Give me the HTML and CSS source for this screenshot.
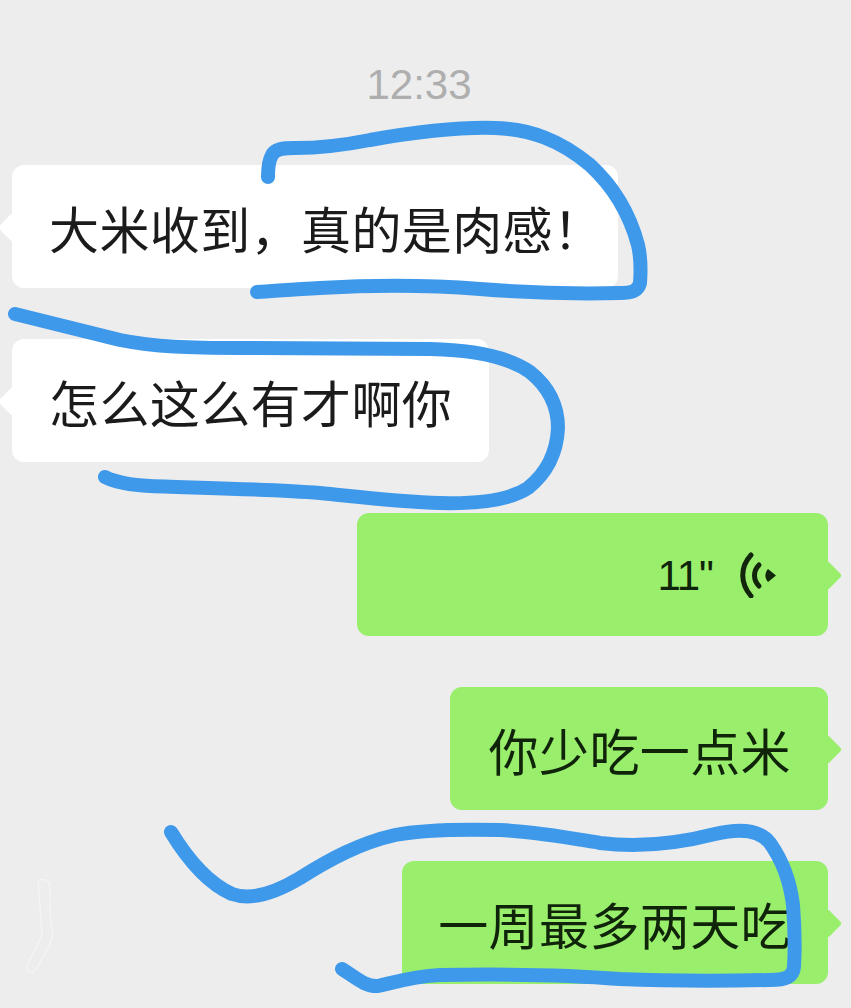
FILE: index.html
```html
<!DOCTYPE html>
<html lang="zh-CN">
<head>
<meta charset="utf-8">
<title>聊天记录</title>
<link rel="stylesheet" href="styles.css">
</head>
<body>
<main class="chat">
  <div class="time">12:33</div>
  <div class="bubble incoming"><span class="text trailing-punct">大米收到，真的是肉感！</span></div>
  <div class="bubble incoming"><span class="text">怎么这么有才啊你</span></div>
  <div class="bubble outgoing voice">
    <span class="duration">11"</span>
    <svg class="voice-icon" viewBox="0 0 36 46" aria-hidden="true">
      <path class="wave" d="M11 3 C0 15 0 31 11 44"/>
      <path class="wave" d="M19 13 C13 19 13 28 19 34"/>
      <path class="dot" d="M28 17 L36 23.5 L28 30 C24.5 26 24.5 21 28 17 Z"/>
    </svg>
  </div>
  <div class="bubble outgoing roomy"><span class="text">你少吃一点米</span></div>
  <div class="bubble outgoing snug"><span class="text">一周最多两天吃</span></div>
</main>
<svg class="scribbles" viewBox="0 0 851 1008" aria-hidden="true">
  <path class="doodle" d="M38 882 C39 879 46 878 49 883 C51 895 50 905 50 913 C51 922 52 930 53 936 C49 948 42 958 37 968 C34 974 28 973 26 968 C30 958 37 946 42 935 C41 920 40 905 38 882 Z"/>
  <path class="ink" d="M268 177 C268 170 269 160 272 155 C275 149 282 148 295 148 C320 148 340 146 370 140 C410 133 460 127 495 128 C530 129 560 140 590 165 C615 188 630 215 638 245 C641 258 641 270 640 283 C638 291 632 293 620 293 C580 294 530 293 480 289 C430 285 370 285 320 288 C295 289 275 291 257 292"/>
  <path class="ink" d="M15 314 C50 323 85 331 120 340 C155 347 190 348 240 348 L430 349 C480 350 510 358 530 372 C550 388 558 408 558 428 C557 450 548 472 528 488 C510 500 480 504 440 503 C400 502 360 497 320 493 C270 489 200 488 150 486 C130 485 115 482 105 477"/>
  <path class="ink" d="M171 832 C185 855 205 882 232 894 C252 901 275 893 300 878 C330 859 360 843 395 835 C420 830 460 829 500 830 C540 832 570 838 600 843 C640 848 680 843 715 834 C740 828 760 830 770 843 C782 860 790 880 793 905 C795 930 795 950 794 967 C793 977 786 980 770 980 C720 981 670 981 620 979 C570 975 500 974 440 975 C415 976 395 982 378 986 C365 987 355 977 342 969"/>
</svg>
</body>
</html>
```
FILE: styles.css
```css
html, body {
  margin: 0;
  padding: 0;
}

body {
  position: relative;
  width: 851px;
  height: 1008px;
  overflow: hidden;
  background: #ededed;
  font-family: "Noto Sans CJK SC", "Liberation Sans", sans-serif;
}

.chat {
  display: flex;
  flex-direction: column;
  gap: 51px;
  box-sizing: border-box;
  height: 100%;
  padding: 62px 23px 0 12px;
}

.time {
  height: 52px;
  padding-right: 2px;
  line-height: 46px;
  text-align: center;
  font-family: "Liberation Sans", sans-serif;
  font-size: 42px;
  color: #aeaeae;
}

.bubble {
  position: relative;
  display: flex;
  align-items: center;
  box-sizing: border-box;
  height: 123px;
  padding: 0 36px 0 38px;
  border-radius: 12px;
  font-size: 50px;
  letter-spacing: 0.4px;
  line-height: 1;
}

.bubble::before {
  content: "";
  position: absolute;
  top: 50%;
  width: 21px;
  height: 21px;
  margin-top: -10px;
  border-radius: 3px;
  background: inherit;
  transform: rotate(45deg);
}

.text {
  position: relative;
  top: 0;
  left: -1px;
  white-space: nowrap;
}

.trailing-punct {
  margin-right: -22px;
}

.incoming {
  align-self: flex-start;
  background: #fff;
  color: #1b1b1b;
}

.incoming::before {
  left: -10px;
}

.outgoing {
  align-self: flex-end;
  background: #99ee6c;
  color: #10240a;
}

.outgoing::before {
  right: -10px;
}

.roomy {
  padding-left: 40px;
}

.snug {
  padding-left: 37px;
}

.voice {
  width: 471px;
  justify-content: flex-end;
  padding-right: 52px;
}

.duration {
  position: relative;
  top: 1px;
  margin-right: 27px;
  font-family: "Liberation Sans", sans-serif;
  font-size: 42px;
  letter-spacing: -1px;
}

.voice-icon {
  position: relative;
  top: 0;
  width: 36px;
  height: 46px;
}

.wave {
  fill: none;
  stroke: #12260b;
  stroke-width: 5;
  stroke-linecap: round;
}

.dot {
  fill: #12260b;
}

.scribbles {
  position: absolute;
  top: 0;
  left: 0;
  width: 851px;
  height: 1008px;
  pointer-events: none;
}

.ink {
  fill: none;
  stroke: #3f99eb;
  stroke-width: 14;
  stroke-linecap: round;
  stroke-linejoin: round;
}

.doodle {
  fill: none;
  stroke: #fff;
  stroke-width: 0.8;
  opacity: 0.7;
}
```
